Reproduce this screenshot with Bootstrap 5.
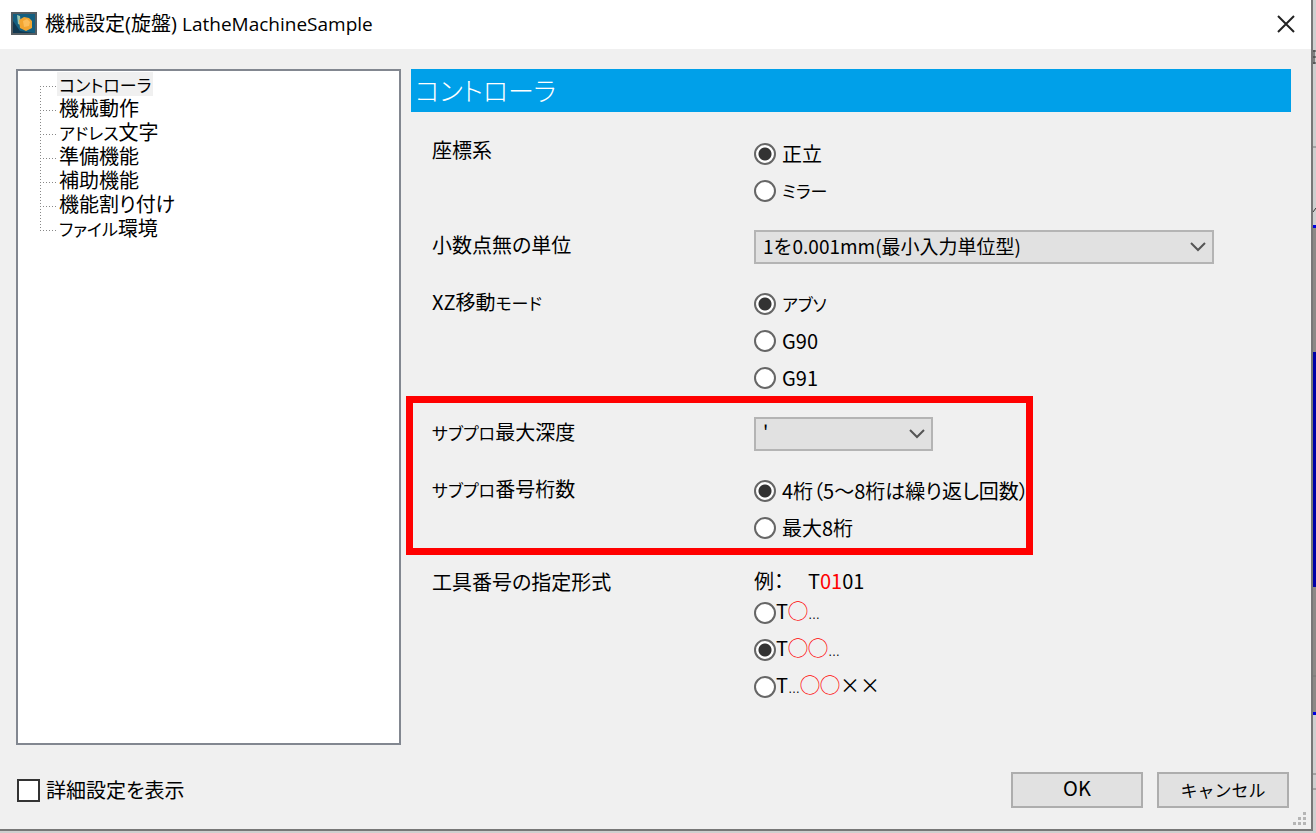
<!DOCTYPE html>
<html lang="ja">
<head>
<meta charset="utf-8">
<meta name="viewport" content="width=device-width, initial-scale=1">
<title>機械設定(旋盤) LatheMachineSample</title>
<link rel="stylesheet" href="https://cdn.jsdelivr.net/npm/bootstrap@5.3.0/dist/css/bootstrap.min.css">
<style>
body{font-family:"Noto Sans CJK JP",sans-serif;font-size:20px;line-height:30px;color:#000;background:#cfcfcf;font-feature-settings:"palt"}
.dialog{background:#f0f0f0;border-right:2px solid #777;border-bottom:2px solid #777;margin-bottom:2px}
.titlebar{background:#fff;height:49px;padding:0 15px 2px 11px;font-family:"Open Sans","Noto Sans CJK JP",sans-serif}
.app-name{font-size:19px}
.close-x{width:20px;height:20px}
.content-area{padding:20px 20px 0 16px;gap:10px}
.kana{font-size:17px}
.tree{flex:0 0 385px;background:#fff;border:2px solid #828790;padding:1px 0 0 22px}
.tree ul{position:relative}
.tree li{line-height:24px;height:24px;padding-left:17px;background:repeating-linear-gradient(90deg,#888 0 1px,transparent 1px 3px) 0 14px/16px 1px no-repeat}
.tree ul::before{content:"";position:absolute;left:0;top:14px;bottom:9px;width:1px;background:repeating-linear-gradient(#888 0 1px,transparent 1px 3px)}
.tree a{display:block;width:max-content;height:24px;padding:0 2px;color:#000;text-decoration:none}
.tree a.active{background:#f0f0f0}
.banner{background:#00a0e9;color:#fff;font-size:26px;line-height:42px;height:43px;padding-left:4px;font-weight:300;margin:0}
.settings{padding:23px 0 0 21px}
.setting{display:grid;grid-template-columns:322px minmax(0,1fr);border:0;margin:0 0 21px}
.opt{display:flex;align-items:center;height:37px;gap:6px;width:max-content}
.opt.tight{gap:0}
.opt input{appearance:none;width:22px;height:22px;margin:0;border:2px solid #666;border-radius:50%;background:#fff}
.opt input:checked{background:radial-gradient(circle,#333 0 6px,#fff 7px)}
.combo{height:34px;border:2px solid #b4b4b4;border-radius:0;padding:0 36px 2px 7px;font-size:19px;line-height:28px;color:#000;background:#e1e1e1 url("data:image/svg+xml,%3Csvg xmlns='http://www.w3.org/2000/svg' viewBox='0 0 16 10'%3E%3Cpath d='M1 1l7 7 7-7' fill='none' stroke='%23555' stroke-width='2'/%3E%3C/svg%3E") right 6px center/16px 10px no-repeat}
.combo.wide{max-width:460px}
.combo.short{max-width:179px}
.marked{position:relative}
.marked::after{content:"";position:absolute;left:-26px;top:-21px;width:627px;height:159px;border:7px solid #f00;pointer-events:none}
.caption{padding-top:2px}
.hot{color:#f00}
.ring{color:#f00;font-weight:500}
.dots{font-family:"Liberation Sans",sans-serif;font-size:12px}
.sample{line-height:27px}
.bottom{padding:27px 22px 21px 17px}
.check{gap:6px}
.check input{appearance:none;width:23px;height:23px;border:2px solid #333;background:#fff;margin:0}
.push{width:132px;height:36px;border:2px solid #adadad;border-radius:0;background:#e1e1e1;font-size:20px;line-height:28px;padding:0 0 4px;color:#000}
.push.kana{font-size:17px;padding:0}
.buttons{gap:14px}
.grip{position:absolute;right:4px;bottom:3px;width:14px;height:14px}
.behind{flex:0 0 3px}
</style>
</head>
<body>
<div class="d-flex min-vh-100">
<main class="dialog position-relative flex-grow-1 d-flex flex-column">
  <header class="titlebar d-flex align-items-center">
    <svg width="26" height="23" viewBox="0 0 26 23" aria-hidden="true"><rect x="1" y="1" width="24" height="21" fill="#145f80" stroke="#555d62" stroke-width="2"/><path d="M2 21V9l7 10 14 2z" fill="#123850"/><path d="M6 3l3 1 1 9-3-1z" fill="#9cc7b2"/><path d="M8 8l5-3 5 1 3 3v7l-6 3-6-3z" fill="#f2a531"/><path d="M12 9l4-2 3 3-1 4-5 1z" fill="#fbbd5a"/></svg>
    <span class="ms-2">機械設定(旋盤) <span class="app-name">LatheMachineSample</span></span>
    <button type="button" class="btn p-0 border-0 ms-auto d-flex" aria-label="閉じる"><svg class="close-x" viewBox="0 0 20 20"><path d="M2 2l16 16M18 2L2 18" fill="none" stroke="#222" stroke-width="2"/></svg></button>
  </header>
  <div class="content-area d-flex flex-grow-1">
    <nav class="tree">
      <ul class="list-unstyled m-0">
        <li><a href="#" class="active"><span class="kana">コントローラ</span></a></li>
        <li><a href="#">機械動作</a></li>
        <li><a href="#"><span class="kana">アドレス</span>文字</a></li>
        <li><a href="#">準備機能</a></li>
        <li><a href="#">補助機能</a></li>
        <li><a href="#">機能割り付け</a></li>
        <li><a href="#"><span class="kana">ファイル</span>環境</a></li>
      </ul>
    </nav>
    <section class="flex-grow-1">
      <h1 class="banner">コントローラ</h1>
      <form class="settings">
        <div class="setting" role="radiogroup" aria-labelledby="l1">
          <div id="l1">座標系</div>
          <div>
            <label class="opt"><input type="radio" name="axis" checked>正立</label>
            <label class="opt"><input type="radio" name="axis"><span class="kana">ミラー</span></label>
          </div>
        </div>
        <div class="setting">
          <label for="unit">小数点無の単位</label>
          <select id="unit" class="form-select combo wide"><option>1を0.001mm(最小入力単位型)</option></select>
        </div>
        <div class="setting" role="radiogroup" aria-labelledby="l3">
          <div id="l3" class="caption">XZ移動<span class="kana">モード</span></div>
          <div>
            <label class="opt"><input type="radio" name="mode" checked><span class="kana">アブソ</span></label>
            <label class="opt"><input type="radio" name="mode">G90</label>
            <label class="opt"><input type="radio" name="mode">G91</label>
          </div>
        </div>
        <div class="marked">
          <div class="setting">
            <label for="depth"><span class="kana">サブプロ</span>最大深度</label>
            <select id="depth" class="form-select combo short"><option>'</option></select>
          </div>
          <div class="setting" role="radiogroup" aria-labelledby="l5">
            <div id="l5" class="caption"><span class="kana">サブプロ</span>番号桁数</div>
            <div>
              <label class="opt"><input type="radio" name="digits" checked>4桁（5～8桁は繰り返し回数）</label>
              <label class="opt"><input type="radio" name="digits">最大8桁</label>
            </div>
          </div>
        </div>
        <div class="setting" role="radiogroup" aria-labelledby="l6">
          <div id="l6">工具番号の指定形式</div>
          <div>
            <div class="sample">例：<span class="ms-4">T<span class="hot">01</span>01</span></div>
            <label class="opt tight"><input type="radio" name="tool"><span>T<span class="ring">◯</span><span class="dots">…</span></span></label>
            <label class="opt tight"><input type="radio" name="tool" checked><span>T<span class="ring">◯◯</span><span class="dots">…</span></span></label>
            <label class="opt tight"><input type="radio" name="tool"><span>T<span class="dots">…</span><span class="ring">◯◯</span>××</span></label>
          </div>
        </div>
      </form>
    </section>
  </div>
  <footer class="bottom d-flex align-items-center">
    <label class="check d-flex align-items-center"><input type="checkbox">詳細設定を表示</label>
    <div class="buttons d-flex ms-auto">
      <button type="button" class="btn push">OK</button>
      <button type="button" class="btn push kana">キャンセル</button>
    </div>
  </footer>
  <svg class="grip" viewBox="0 0 14 14" fill="#b5b5b5" aria-hidden="true"><path d="M10 0h3v3h-3zM5 5h3v3H5zM10 5h3v3h-3zM0 10h3v3H0zM5 10h3v3H5zM10 10h3v3h-3z"/></svg>
</main>
<svg class="behind" width="3" viewBox="0 0 3 833" preserveAspectRatio="none" aria-hidden="true">
  <path d="M0 0h3v833H0z" fill="#cfcfcf"/>
  <path d="M0 228h3v124H0zM0 587h3v125H0z" fill="#8b8986"/>
  <path d="M0 352h3v235H0z" fill="#0000a8"/>
  <path d="M0 225h3v3H0zM0 712h3v3H0z" fill="#0000e0"/>
  <path d="M0 51h3M0 57h3M0 63h3M1 50v14M0 212l3-4" stroke="#333" fill="none"/>
  <path d="M0 147h3M0 676h3M0 774h3M0 789h3" stroke="#777"/>
</svg>
</div>
<script src="https://cdn.jsdelivr.net/npm/bootstrap@5.3.0/dist/js/bootstrap.bundle.min.js"></script>
</body>
</html>
